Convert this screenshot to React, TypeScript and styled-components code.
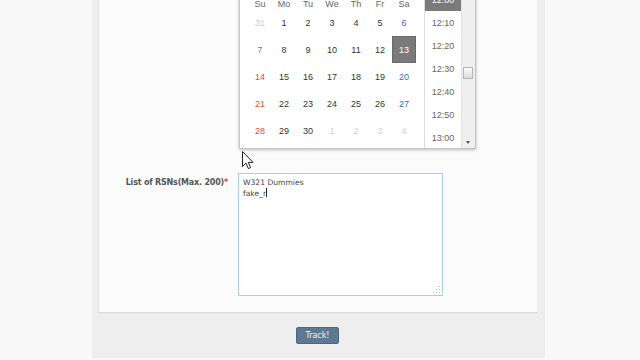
import React from "react";
import styled, { createGlobalStyle } from "styled-components";

const GlobalStyle = createGlobalStyle`
  html, body {
    margin: 0;
    padding: 0;
    background: #f9f9f9;
    width: 640px;
    height: 360px;
    overflow: hidden;
  }
`;

const Page = styled.div`
  position: relative;
  width: 640px;
  height: 360px;
  overflow: hidden;
  display: flex;
  align-items: flex-start;
`;

const Container = styled.div`
  margin: -68px 0 0 92px;
  width: 453px;
  box-sizing: border-box;
  padding: 0 8px 0 6px;
  background: #eeeeee;
  display: flex;
  flex-direction: column;
`;

const Panel = styled.div`
  background: #fbfbfb;
  border-left: 1px solid #e6e6e6;
  border-bottom: 1px solid #d8d8d8;
  padding: 16px 0 16px;
  display: flex;
  flex-direction: column;
`;

const FormRow = styled.div<{ $gap?: number }>`
  display: flex;
  align-items: flex-start;
  gap: 10px;
  margin-top: ${(p) => p.$gap ?? 0}px;
`;

const Label = styled.div`
  width: 129px;
  flex-shrink: 0;
  text-align: right;
  font-family: "DejaVu Sans", Verdana, sans-serif;
  font-size: 8px;
  font-weight: bold;
  color: #555;
  padding-top: 5px;
  white-space: nowrap;
  letter-spacing: -0.2px;
`;

const Star = styled.span`
  color: #d23c3c;
`;

const Field = styled.div`
  position: relative;
`;

const DateInput = styled.div`
  width: 160px;
  height: 20px;
  box-sizing: border-box;
  border: 1px solid #ccc;
  background: #fff;
  font-family: "DejaVu Sans", Verdana, sans-serif;
  font-size: 8px;
  line-height: 18px;
  padding: 0 4px;
  color: #333;
`;

const Picker = styled.div`
  position: absolute;
  top: calc(100% + 2px);
  left: 1px;
  display: flex;
  align-items: stretch;
  background: #fff;
  border: 1px solid #c4c4c4;
  box-shadow: 0 1px 3px rgba(0, 0, 0, 0.25);
  font-family: "Liberation Sans", Arial, sans-serif;
  z-index: 2;
`;

const Calendar = styled.div`
  width: 168px;
  padding: 0 8px 4px;
  display: flex;
  flex-direction: column;
`;

const MonthBar = styled.div`
  height: 28px;
  display: flex;
  align-items: center;
  justify-content: center;
  font-size: 10px;
  font-weight: bold;
  color: #444;
`;

const Grid = styled.div`
  display: grid;
  grid-template-columns: repeat(7, 24px);
`;

const DayName = styled.div`
  height: 10px;
  display: flex;
  align-items: center;
  justify-content: center;
  font-size: 9px;
  color: #666;
`;

type Tone = "normal" | "sun" | "sat" | "other" | "current";

const dayColors: Record<Tone, string> = {
  normal: "#333",
  sun: "#d2553a",
  sat: "#3d6bb8",
  other: "#d0d0d0",
  current: "#fff",
};

const Day = styled.div<{ $tone: Tone }>`
  height: 27px;
  display: flex;
  align-items: center;
  justify-content: center;
  font-size: 9px;
  color: ${(p) => dayColors[p.$tone]};
  background: ${(p) => (p.$tone === "current" ? "#7a7a7a" : "transparent")};
  box-shadow: ${(p) => (p.$tone === "current" ? "inset 0 0 0 1px #6a6a6a" : "none")};
`;

const TimeBox = styled.div`
  width: 36px;
  height: 177px;
  border-left: 1px solid #dcdcdc;
  overflow: hidden;
`;

const TimeList = styled.div`
  margin-top: -6px;
  display: flex;
  flex-direction: column;
`;

const TimeItem = styled.div<{ $active?: boolean }>`
  height: 23px;
  flex-shrink: 0;
  display: flex;
  align-items: center;
  justify-content: center;
  font-size: 9px;
  color: ${(p) => (p.$active ? "#fff" : "#666")};
  background: ${(p) => (p.$active ? "#7a7a7a" : "transparent")};
`;

const ScrollTrack = styled.div`
  width: 13px;
  height: 177px;
  background: #efefef;
  border-left: 1px solid #e2e2e2;
  position: relative;
`;

const Thumb = styled.div`
  position: absolute;
  top: 96px;
  left: 1px;
  width: 10px;
  height: 12px;
  box-sizing: border-box;
  border: 1px solid #b5b5b5;
  background: linear-gradient(#fafafa, #dcdcdc);
`;

const DownArrow = styled.div`
  position: absolute;
  bottom: 4px;
  left: 4px;
  width: 0;
  height: 0;
  border-left: 2.5px solid transparent;
  border-right: 2.5px solid transparent;
  border-top: 3px solid #555;
`;

const TextBox = styled.div`
  width: 205px;
  height: 123px;
  box-sizing: border-box;
  border: 1px solid #a8cfe6;
  background: #fff;
  padding: 4px 4px;
  font-family: "DejaVu Sans", Verdana, sans-serif;
  font-size: 7.6px;
  line-height: 10px;
  color: #444;
  position: relative;
`;

const Line = styled.div`
  white-space: nowrap;
`;

const Caret = styled.span`
  display: inline-block;
  width: 1px;
  height: 9px;
  background: #222;
  vertical-align: -1px;
`;

const Grip = styled.svg`
  position: absolute;
  right: 1px;
  bottom: 1px;
`;

const Footer = styled.div`
  height: 45px;
  display: flex;
  align-items: center;
  justify-content: center;
`;

const Button = styled.button`
  width: 43px;
  height: 17px;
  padding: 0;
  border: 1px solid #4f657c;
  border-radius: 2px;
  background: #5f7892;
  color: #f2f5f8;
  font-family: "DejaVu Sans", Verdana, sans-serif;
  font-size: 8px;
  cursor: pointer;
`;

const Cursor = styled.svg`
  position: absolute;
  left: 242px;
  top: 151px;
  z-index: 5;
`;

const dayNames = ["Su", "Mo", "Tu", "We", "Th", "Fr", "Sa"];

const weeks: { n: number; other?: boolean }[][] = [
  [{ n: 31, other: true }, { n: 1 }, { n: 2 }, { n: 3 }, { n: 4 }, { n: 5 }, { n: 6 }],
  [{ n: 7 }, { n: 8 }, { n: 9 }, { n: 10 }, { n: 11 }, { n: 12 }, { n: 13 }],
  [{ n: 14 }, { n: 15 }, { n: 16 }, { n: 17 }, { n: 18 }, { n: 19 }, { n: 20 }],
  [{ n: 21 }, { n: 22 }, { n: 23 }, { n: 24 }, { n: 25 }, { n: 26 }, { n: 27 }],
  [
    { n: 28 },
    { n: 29 },
    { n: 30 },
    { n: 1, other: true },
    { n: 2, other: true },
    { n: 3, other: true },
    { n: 4, other: true },
  ],
];

const times = ["11:50", "12:00", "12:10", "12:20", "12:30", "12:40", "12:50", "13:00", "13:10"];

const toneFor = (d: { n: number; other?: boolean }, col: number): Tone => {
  if (d.other) return "other";
  if (d.n === 13) return "current";
  if (col === 0) return "sun";
  if (col === 6) return "sat";
  return "normal";
};

const App = () => {
  return (
    <Page>
      <GlobalStyle />
      <Container>
        <Panel>
          <FormRow>
            <Label>
              Tracking Time<Star>*</Star>
            </Label>
            <Field>
              <DateInput>2013/04/13 12:00</DateInput>
              <Picker>
                <Calendar>
                  <MonthBar>April 2013</MonthBar>
                  <Grid>
                    {dayNames.map((d) => (
                      <DayName key={d}>{d}</DayName>
                    ))}
                    {weeks.map((w, wi) =>
                      w.map((d, ci) => (
                        <Day key={`${wi}-${ci}`} $tone={toneFor(d, ci)}>
                          {d.n}
                        </Day>
                      ))
                    )}
                  </Grid>
                </Calendar>
                <TimeBox>
                  <TimeList>
                    {times.map((t) => (
                      <TimeItem key={t} $active={t === "12:00"}>
                        {t}
                      </TimeItem>
                    ))}
                  </TimeList>
                </TimeBox>
                <ScrollTrack>
                  <Thumb />
                  <DownArrow />
                </ScrollTrack>
              </Picker>
            </Field>
          </FormRow>
          <FormRow $gap={205}>
            <Label>
              List of RSNs(Max. 200)<Star>*</Star>
            </Label>
            <Field>
              <TextBox>
                <Line>W321 Dummies</Line>
                <Line>
                  fake_r
                  <Caret />
                </Line>
                <Grip width="8" height="8" viewBox="0 0 8 8">
                  <g fill="#b8b8b8">
                    <rect x="6" y="0" width="1" height="1" />
                    <rect x="3" y="3" width="1" height="1" />
                    <rect x="6" y="3" width="1" height="1" />
                    <rect x="0" y="6" width="1" height="1" />
                    <rect x="3" y="6" width="1" height="1" />
                    <rect x="6" y="6" width="1" height="1" />
                  </g>
                </Grip>
              </TextBox>
            </Field>
          </FormRow>
        </Panel>
        <Footer>
          <Button>Track!</Button>
        </Footer>
      </Container>
      <Cursor width="12" height="19" viewBox="0 0 12 19">
        <path
          d="M0.5 0.5 L0.5 15.5 L4 12.2 L6.4 17.6 L8.6 16.6 L6.3 11.4 L11 11.4 Z"
          fill="#fff"
          stroke="#222"
          strokeWidth="1"
          strokeLinejoin="round"
        />
      </Cursor>
    </Page>
  );
};

export default App;
